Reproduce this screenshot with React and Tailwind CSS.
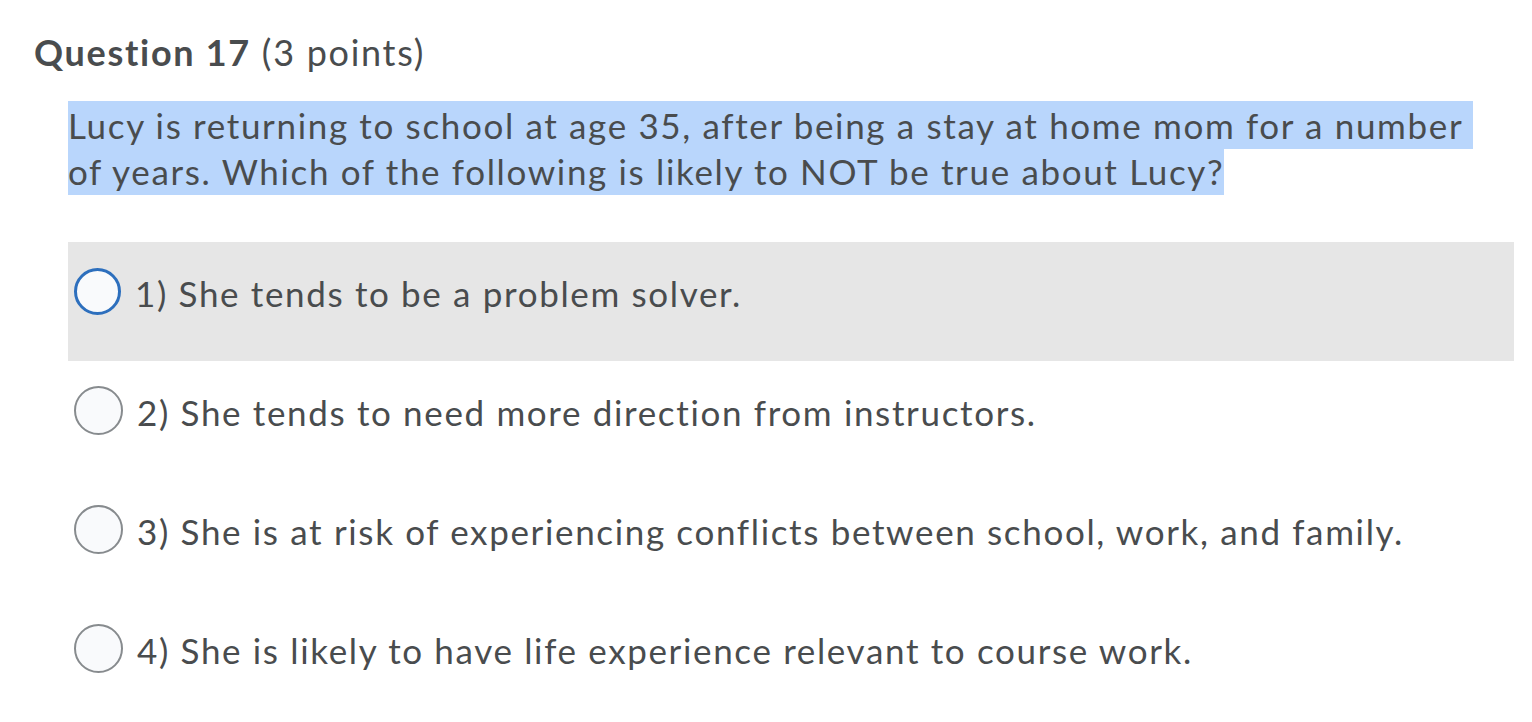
const options = [
  '1) She tends to be a problem solver.',
  '2) She tends to need more direction from instructors.',
  '3) She is at risk of experiencing conflicts between school, work, and family.',
  '4) She is likely to have life experience relevant to course work.',
];

const Radio = ({ focused }) => (
  <span
    className={
      focused
        ? 'w-[47px] h-[47px] rounded-full border-[3px] border-[#2d6fbd] bg-[#f9fafc] shrink-0'
        : 'w-[49px] h-[49px] rounded-full border-2 border-[#878b8e] bg-[#f9fafc] shrink-0'
    }
  />
);

const App = () => {
  return (
    <div className="w-[1532px] h-[722px] bg-white text-[#494c4e] font-['Lato','Noto_Sans',sans-serif] [font-variant-ligatures:none] overflow-hidden">
      <div className="pl-[34px] pt-[28px]">
        <h2 className="text-[36px] leading-[48px] tracking-[1.7px]">
          <span className="font-bold">Question 17</span> <span>(3 points)</span>
        </h2>
      </div>

      <div className="pl-[68px] pr-[18px]">
        <p className="mt-[26px] text-[35px] leading-[46px] tracking-[1.65px]">
          <span className="bg-[#b9d6fc] py-[3px] box-decoration-clone">
            Lucy is returning to school at age 35, after being a stay at home mom for a number{'\u00a0'}
          </span>
          <br />
          <span className="bg-[#b9d6fc] py-[3px] box-decoration-clone">
            of years. Which of the following is likely to NOT be true about Lucy?
          </span>
        </p>

        <div className="mt-[48px] flex flex-col">
          {options.map((opt, i) => (
            <div
              key={i}
              className={
                'flex items-center gap-[14px] h-[119px] pb-[20px] pl-[6px] ' + (i === 0 ? 'bg-[#e6e6e6]' : '')
              }
            >
              <Radio focused={i === 0} />
              <span className="text-[35px] leading-[40px] tracking-[1.65px] pt-[2px]">{opt}</span>
            </div>
          ))}
        </div>
      </div>
    </div>
  );
};

export default App;
